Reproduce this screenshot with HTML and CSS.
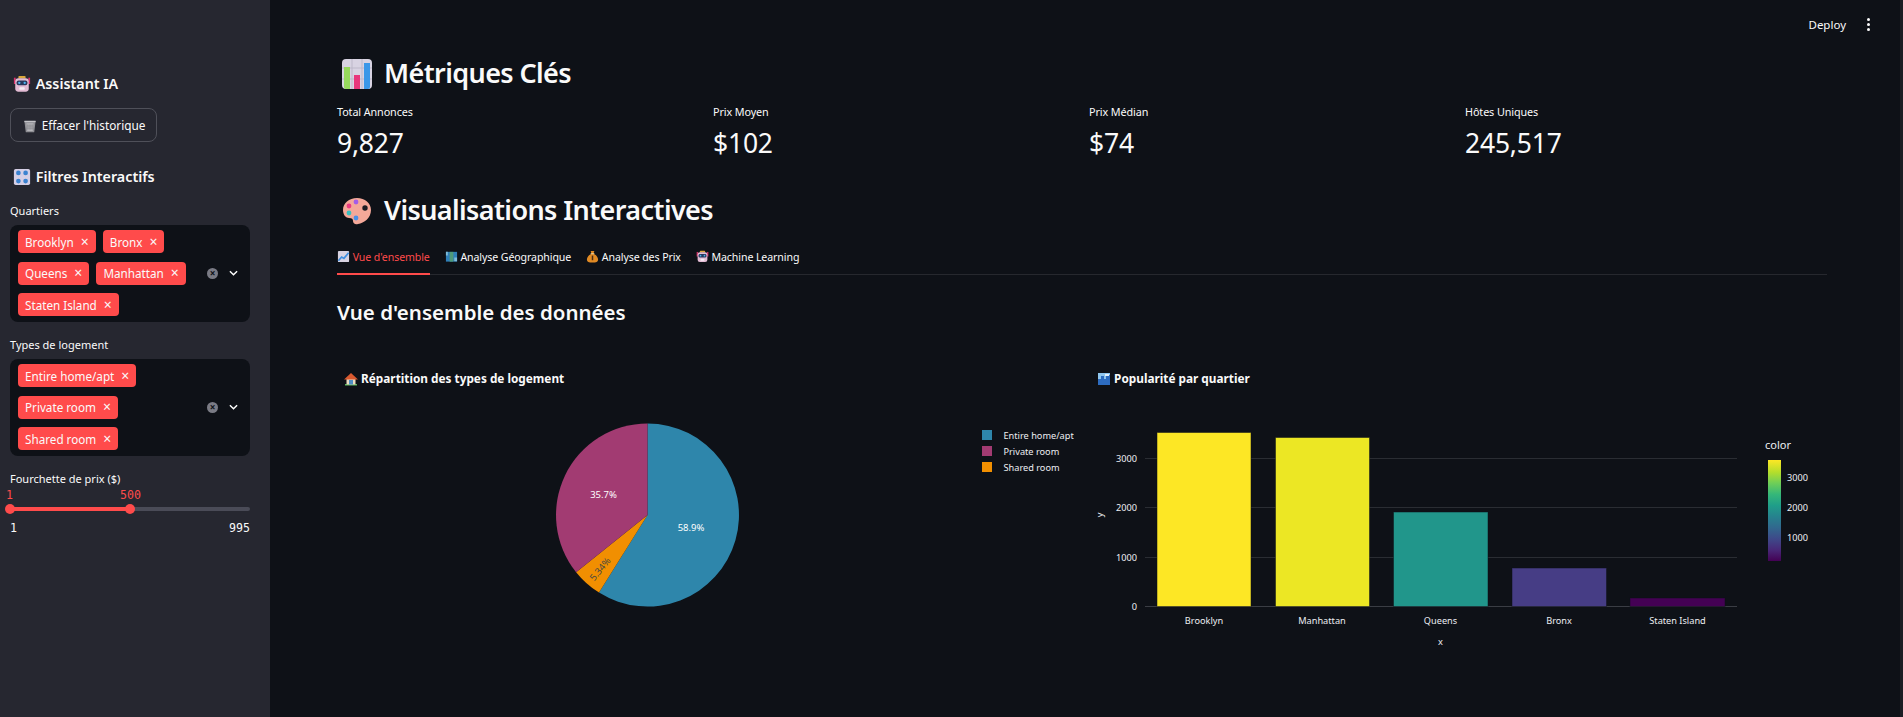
FILE: index.html
```html
<!DOCTYPE html>
<html lang="en">
<head>
    <meta charset="UTF-8">
    <meta name="viewport" content="width=device-width, initial-scale=1.0">
    <title>Dashboard</title>
    <link rel="stylesheet" href="styles.css">
</head>
<body>
  <svg class="icon-defs">
    <symbol id="i-robot" viewBox="0 0 20 20">
      <rect x="1" y="3" width="2" height="7" fill="#d8326a"/>
      <rect x="17" y="3" width="2" height="7" fill="#d8326a"/>
      <rect x="6" y="1" width="8" height="3" rx="1" fill="#d9a83c"/>
      <rect x="2.5" y="3.500" width="15" height="15" rx="3.500" fill="#e3bcd4"/>
      <rect x="4" y="6" width="12" height="5.500" rx="2" fill="#28395c"/>
      <circle cx="7" cy="8.700" r="1.300" fill="#4fb4ee"/>
      <circle cx="13" cy="8.700" r="1.300" fill="#4fb4ee"/>
      <rect x="7" y="13.500" width="6" height="3" rx="1" fill="#f6eef4"/>
    </symbol>
    <symbol id="i-trash" viewBox="0 0 20 20">
      <path d="M2 3h16l-2 16H4z" fill="#8f8f94"/>
      <path d="M2 2.500h16v2H2z" fill="#c4c4c8"/>
      <path d="M5 6h10l-1 11H6z" fill="#b9b9bd"/>
      <path d="M7 7v9M10 7v9M13 7v9M5.500 10h9M5.500 13h9" stroke="#77777c" stroke-width=".8"/>
    </symbol>
    <symbol id="i-knobs" viewBox="0 0 20 20">
      <rect x="1" y="1" width="18" height="18" rx="2" fill="#d5cfe6"/>
      <circle cx="6" cy="5.500" r="2.600" fill="#3b82d0"/>
      <circle cx="14" cy="5.500" r="2.600" fill="#3b82d0"/>
      <circle cx="6" cy="14.500" r="2.600" fill="#3b82d0"/>
      <circle cx="14" cy="14.500" r="2.600" fill="#3b82d0"/>
    </symbol>
    <symbol id="i-bars" viewBox="0 0 30 30">
      <rect width="30" height="30" rx="4" fill="#d8d3e2"/>
      <path d="M0 9h30M0 20h30M10 0v30M20 0v30" stroke="#bdb8c9" stroke-width="1"/>
      <path d="M2 8h6v22H4a2 2 0 0 1-2-2z" fill="#96d85c"/>
      <rect x="12" y="16" width="6" height="14" fill="#e8367c"/>
      <path d="M22 4h6v24a2 2 0 0 1-2 2h-4z" fill="#3a97e8"/>
    </symbol>
    <symbol id="i-palette" viewBox="0 0 30 30">
      <path d="M15 2C7 2 1 7 1 14c0 5 3 8 6 8 3 0 4 1 4 3 0 2 2 4 5 3 6-1 13-6 13-14C29 7 23 2 15 2z" fill="#f4a899"/>
      <circle cx="23" cy="12" r="2.700" fill="#1c1c24"/>
      <circle cx="7" cy="10" r="2.400" fill="#ec3a80"/>
      <circle cx="14" cy="6" r="2.400" fill="#a45ce8"/>
      <circle cx="7" cy="17" r="2.400" fill="#38c0c0"/>
      <circle cx="14" cy="22" r="2.400" fill="#4a90e8"/>
    </symbol>
    <symbol id="i-trend" viewBox="0 0 14 14">
      <rect x="1" y="1" width="12" height="12" rx="1" fill="#d8d3e2"/>
      <path d="M1.500 11.500L5 7.500l2.500 1.500L12.500 3" stroke="#3f8fe0" stroke-width="1.800" fill="none"/>
    </symbol>
    <symbol id="i-map" viewBox="0 0 14 14">
      <rect x="1" y="2" width="12" height="10.500" fill="#2f7fb8"/>
      <path d="M5 2h4v10.500H5z" fill="#4f9a7a"/>
      <path d="M1 2h2v4H1zM10 8h3v4h-3z" fill="#7fbcd8"/>
    </symbol>
    <symbol id="i-money" viewBox="0 0 14 14">
      <path d="M5 1h4L8 4c3 1 5 4 5 6 0 3-2 3.500-6 3.500S1 13 1 10c0-2 2-5 5-6z" fill="#e08a24"/>
      <rect x="5" y="3.500" width="4" height="1" fill="#f2d9a4"/>
      <rect x="6.200" y="6" width="1.600" height="5" fill="#4a2a10"/>
    </symbol>
    <symbol id="i-house" viewBox="0 0 14 14">
      <rect x="1" y="12" width="12" height="1.500" fill="#5cb860"/>
      <rect x="2.500" y="6" width="9" height="6.500" fill="#ecdcc0"/>
      <path d="M0 7.500L7 1l7 6.500z" fill="#d9592f"/>
      <rect x="5" y="8" width="4" height="4.500" fill="#4f8fc4"/>
    </symbol>
    <symbol id="i-city" viewBox="0 0 14 14">
      <rect x="1" y="1" width="12" height="12" fill="#8fc6ee"/>
      <path d="M1 13V7h3v-3h3v3h2V3h4v10z" fill="#2d6cc0"/>
      <path d="M8 2h4v2H8z" fill="#e4f0fa"/>
    </symbol>
  </svg>

  <div class="app">
    <aside class="sidebar">
      <h3 class="side-title"><svg class="ico-18"><use href="#i-robot"/></svg> Assistant IA</h3>
      <button class="btn"><svg class="ico-14"><use href="#i-trash"/></svg> Effacer l'historique</button>

      <h3 class="side-title filters"><svg class="ico-18"><use href="#i-knobs"/></svg> Filtres Interactifs</h3>

      <label class="field-label">Quartiers</label>
      <div class="multi">
        <div class="tags">
          <span class="tag">Brooklyn <i>×</i></span>
          <span class="tag">Bronx <i>×</i></span>
          <span class="tag">Queens <i>×</i></span>
          <span class="tag">Manhattan <i>×</i></span>
          <span class="tag">Staten Island <i>×</i></span>
        </div>
        <span class="clear">×</span>
        <svg class="chev" viewBox="0 0 10 6"><path d="M1 1l4 4 4-4" stroke="#fff" stroke-width="1.600" fill="none"/></svg>
      </div>

      <label class="field-label types">Types de logement</label>
      <div class="multi">
        <div class="tags">
          <span class="tag">Entire home/apt <i>×</i></span>
          <span class="tag">Private room <i>×</i></span>
          <span class="tag">Shared room <i>×</i></span>
        </div>
        <span class="clear">×</span>
        <svg class="chev" viewBox="0 0 10 6"><path d="M1 1l4 4 4-4" stroke="#fff" stroke-width="1.600" fill="none"/></svg>
      </div>

      <label class="field-label price">Fourchette de prix ($)</label>
      <div class="slider-vals">
        <span>1</span>
        <span>500</span>
      </div>
      <div class="slider">
        <div class="slider-fill"></div>
        <div class="thumb thumb-a"></div>
        <div class="thumb thumb-b"></div>
      </div>
      <div class="slider-range">
        <span>1</span>
        <span>995</span>
      </div>
    </aside>

    <main class="main">
      <div class="topbar">
        <span class="deploy">Deploy</span>
        <span class="dots"><b></b><b></b><b></b></span>
      </div>

      <div class="content">
        <h2 class="section"><svg class="ico-30"><use href="#i-bars"/></svg>Métriques Clés</h2>

        <div class="metrics">
          <div class="metric"><div class="metric-label">Total Annonces</div><div class="metric-value">9,827</div></div>
          <div class="metric"><div class="metric-label">Prix Moyen</div><div class="metric-value">$102</div></div>
          <div class="metric"><div class="metric-label">Prix Médian</div><div class="metric-value">$74</div></div>
          <div class="metric"><div class="metric-label">Hôtes Uniques</div><div class="metric-value">245,517</div></div>
        </div>

        <h2 class="section viz"><svg class="ico-30"><use href="#i-palette"/></svg>Visualisations Interactives</h2>

        <div class="tabs">
          <span class="tab active"><svg class="ico-13"><use href="#i-trend"/></svg> Vue d'ensemble</span>
          <span class="tab"><svg class="ico-13"><use href="#i-map"/></svg> Analyse Géographique</span>
          <span class="tab"><svg class="ico-13"><use href="#i-money"/></svg> Analyse des Prix</span>
          <span class="tab"><svg class="ico-13"><use href="#i-robot"/></svg> Machine Learning</span>
        </div>

        <h3 class="overview">Vue d'ensemble des données</h3>

        <div class="charts">
          <div class="chart">
            <div class="chart-title"><svg class="ico-14"><use href="#i-house"/></svg> Répartition des types de logement</div>
            <svg class="plot" viewBox="337 400 737 300">
              <path d="M647.500 515V423.500A91.500 91.500 0 1 1 599 592.600Z" fill="#2e86ab"/>
              <path d="M647.500 515L599 592.600A91.500 91.500 0 0 1 576.100 572.200Z" fill="#f18f01"/>
              <path d="M647.500 515L576.100 572.200A91.500 91.500 0 0 1 647.500 423.500Z" fill="#a23b72"/>
              <text class="pie-txt" x="691" y="531">58.9%</text>
              <text class="pie-txt" x="603.500" y="498">35.7%</text>
              <text class="pie-txt dark" transform="translate(600 569) rotate(-51)" y="3.500">5.34%</text>
              <rect x="982" y="430" width="10" height="10" fill="#2e86ab"/>
              <rect x="982" y="446" width="10" height="10" fill="#a23b72"/>
              <rect x="982" y="462" width="10" height="10" fill="#f18f01"/>
              <text class="tick" x="1003.500" y="439">Entire home/apt</text>
              <text class="tick" x="1003.500" y="455">Private room</text>
              <text class="tick" x="1003.500" y="471">Shared room</text>
            </svg>
          </div>

          <div class="chart">
            <div class="chart-title"><svg class="ico-14"><use href="#i-city"/></svg> Popularité par quartier</div>
            <svg class="plot" viewBox="1090 400 737 300">
              <defs>
                <linearGradient id="viridis" x1="0" y1="1" x2="0" y2="0">
                  <stop offset="0" stop-color="#440154"/>
                  <stop offset=".11" stop-color="#482878"/>
                  <stop offset=".22" stop-color="#3e4989"/>
                  <stop offset=".33" stop-color="#31688e"/>
                  <stop offset=".44" stop-color="#26828e"/>
                  <stop offset=".55" stop-color="#1f9e89"/>
                  <stop offset=".66" stop-color="#35b779"/>
                  <stop offset=".77" stop-color="#6ece58"/>
                  <stop offset=".88" stop-color="#b5de2b"/>
                  <stop offset="1" stop-color="#fde725"/>
                </linearGradient>
              </defs>
              <path d="M1145 458.500H1737M1145 507.500H1737M1145 557.500H1737" stroke="#2a2d33" stroke-width="1"/>
              <path d="M1145 606.500H1737" stroke="#3a3d44" stroke-width="1"/>
              <g class="bars">
                <rect x="1157" y="432.500" width="94" height="174" fill="#fde725"/>
                <rect x="1275.500" y="437.500" width="94" height="169" fill="#ece724"/>
                <rect x="1393.500" y="512" width="94.500" height="94.500" fill="#21968b"/>
                <rect x="1512" y="568" width="94.500" height="38.500" fill="#463d85"/>
                <rect x="1630" y="598" width="95" height="8.500" fill="#440154"/>
              </g>
              <text class="tick end" x="1137" y="462">3000</text>
              <text class="tick end" x="1137" y="511">2000</text>
              <text class="tick end" x="1137" y="561">1000</text>
              <text class="tick end" x="1137" y="610">0</text>
              <text class="tick mid" x="1204" y="624">Brooklyn</text>
              <text class="tick mid" x="1322" y="624">Manhattan</text>
              <text class="tick mid" x="1440.500" y="624">Queens</text>
              <text class="tick mid" x="1559" y="624">Bronx</text>
              <text class="tick mid" x="1677.500" y="624">Staten Island</text>
              <text class="tick mid" x="1440.500" y="645">x</text>
              <text class="tick mid" transform="translate(1103 515) rotate(-90)">y</text>
              <text class="cbar-title" x="1765" y="449">color</text>
              <rect x="1768" y="460" width="13" height="101" fill="url(#viridis)"/>
              <text class="tick" x="1787" y="481">3000</text>
              <text class="tick" x="1787" y="511">2000</text>
              <text class="tick" x="1787" y="541">1000</text>
            </svg>
          </div>
        </div>
      </div>
    </main>
  </div>
</body>
</html>
```
FILE: styles.css
```css
* {
    box-sizing: border-box;
}

html, body {
    height: 100%;
}

body {
    margin: 0;
    background-color: #0e1117;
    color: #fafafa;
    font-family: "Noto Sans", sans-serif;
    overflow: hidden;
}

.icon-defs {
    display: none;
}

.ico-13, .ico-14, .ico-18, .ico-30 {
    vertical-align: middle;
}

.ico-13 { width: 13px; height: 13px; }
.ico-14 { width: 14px; height: 14px; }
.ico-18 { width: 18px; height: 18px; }
.ico-30 { width: 30px; height: 30px; }

.app {
    display: flex;
    height: 717px;
}

/* sidebar */
.sidebar {
    width: 270px;
    flex: none;
    background-color: #262730;
    padding: 73px 20px 0 10px;
}

.side-title {
    margin: 0;
    font-size: 14.300px;
    font-weight: 600;
    line-height: 22px;
    white-space: nowrap;
}

.side-title svg {
    margin: -2px 1px 0 3px;
}

.side-title.filters {
    margin-top: 24px;
}

.btn {
    display: block;
    margin-top: 13px;
    width: 147px;
    height: 34px;
    padding: 0 0 0 1px;
    background: transparent;
    border: 1px solid #4f5059;
    border-radius: 8px;
    color: #fafafa;
    font-family: inherit;
    font-size: 11.800px;
    white-space: nowrap;
}

.btn svg {
    margin: -2px 2px 0 0;
}

.field-label {
    display: block;
    margin-top: 15px;
    font-size: 11px;
    line-height: 16px;
}

.field-label.types,
.field-label.price {
    margin-top: 15px;
}

.multi {
    display: flex;
    align-items: center;
    margin-top: 6px;
    width: 240px;
    padding: 5px 0 6px 8px;
    background-color: #0e1117;
    border-radius: 8px;
}

.tags {
    display: flex;
    flex-wrap: wrap;
    gap: 8.500px 7px;
    width: 186px;
}

.tag {
    display: inline-flex;
    align-items: center;
    justify-content: space-between;
    height: 23px;
    padding: 0 7px 0 7px;
    gap: 7px;
    background-color: #ff4b4b;
    border-radius: 4px;
    font-size: 11.700px;
    white-space: nowrap;
}

.tag i {
    font-style: normal;
    font-size: 14px;
    line-height: 14px;
}

.clear {
    width: 11px;
    height: 11px;
    margin-left: 3px;
    border-radius: 50%;
    background-color: #7a7b85;
    color: #0e1117;
    font-size: 10px;
    line-height: 11px;
    text-align: center;
    font-weight: 700;
}

.chev {
    width: 9px;
    height: 6px;
    margin-left: 11px;
}

.slider-vals, .slider-range {
    display: flex;
    font-family: "DejaVu Sans Mono", monospace;
    font-size: 11.600px;
}

.slider-vals {
    margin: 1px 0 0 -4px;
    gap: 107px;
    color: #ff4b4b;
    line-height: 14px;
}

.slider {
    position: relative;
    width: 240px;
    height: 4px;
    margin-top: 5px;
    background-color: #4a4b57;
    border-radius: 2px;
}

.slider-fill {
    height: 4px;
    width: 120px;
    background-color: #ff4b4b;
    border-radius: 2px;
}

.thumb {
    position: absolute;
    top: -3px;
    width: 10px;
    height: 10px;
    margin-left: -5px;
    background-color: #ff4b4b;
    border-radius: 50%;
}

.thumb-a { left: 0; }
.thumb-b { left: 120px; }

.slider-range {
    justify-content: space-between;
    width: 240px;
    margin-top: 10px;
    line-height: 15px;
}

/* main */
.main {
    flex: 1;
    min-width: 0;
    border-right: 3px solid #1b1d23;
}

.topbar {
    display: flex;
    align-items: center;
    justify-content: flex-end;
    height: 52px;
    padding: 0 30px 4px 0;
}

.deploy {
    font-size: 11.500px;
}

.dots {
    display: flex;
    flex-direction: column;
    gap: 2px;
    margin-left: 21px;
}

.dots b {
    width: 3px;
    height: 3px;
    background-color: #fafafa;
    border-radius: 50%;
}

.content {
    width: 1490px;
    margin-left: 67px;
}

.section {
    margin: 0;
    font-size: 27px;
    font-weight: 600;
    letter-spacing: -.6px;
    line-height: 42px;
}

.section svg {
    margin: -3px 12px 0 5px;
}

.metrics {
    display: grid;
    grid-template-columns: repeat(4, 376px);
    margin-top: 9px;
}

.metric-label {
    font-size: 10.800px;
    letter-spacing: -.1px;
    line-height: 18px;
}

.metric-value {
    font-size: 26.500px;
    letter-spacing: -.2px;
    line-height: 42px;
    margin-top: 1px;
}

.section.viz {
    margin-top: 24.500px;
}

.tabs {
    display: flex;
    gap: 15px;
    margin-top: 11px;
    height: 33px;
    border-bottom: 1px solid #26282e;
}

.tab {
    height: 33px;
    padding-top: 6px;
    font-size: 10.600px;
    letter-spacing: -.1px;
    line-height: 18px;
    white-space: nowrap;
}

.tab svg {
    margin-top: -2px;
}

.tab.active {
    color: #ff4b4b;
    border-bottom: 2px solid #ff4b4b;
}

.overview {
    margin: 22.500px 0 0 0;
    font-size: 20.500px;
    font-weight: 600;
    line-height: 30px;
}

.charts {
    display: grid;
    grid-template-columns: 737px 737px;
    gap: 16px;
    margin-top: 42px;
}

.chart-title {
    padding-left: 7px;
    font-size: 11.800px;
    font-weight: 700;
    line-height: 18px;
    white-space: nowrap;
}

.chart-title svg {
    margin-top: -2px;
}

.plot {
    display: block;
    width: 737px;
    height: 300px;
    margin-top: 13px;
}

.plot text {
    font-family: "Noto Sans", sans-serif;
}

.tick {
    font-size: 9.200px;
    fill: #eceef2;
}

.tick.end { text-anchor: end; }
.tick.mid { text-anchor: middle; }

.cbar-title {
    font-size: 11px;
    fill: #eceef2;
}

.pie-txt {
    font-size: 9.500px;
    fill: #fff;
    text-anchor: middle;
}

.pie-txt.dark {
    fill: #4a4a40;
}

.bars rect {
    stroke: #0e1117;
    stroke-opacity: .5;
    stroke-width: 1;
}
```
